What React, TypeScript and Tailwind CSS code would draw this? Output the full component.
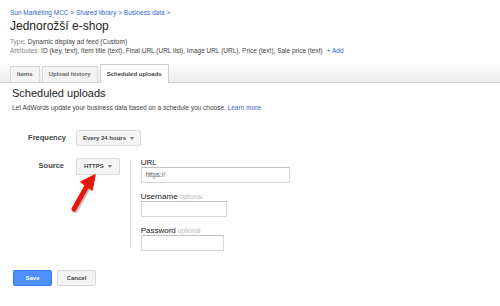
const font = { fontFamily: '"Liberation Sans", Arial, sans-serif' };

function Caret() {
  return <span className="ml-[4px] inline-block h-0 w-0 border-x-[2px] border-t-[3px] border-x-transparent border-t-[#777] align-middle" />;
}

function Field({ label, optional, width, value }: { label: string; optional?: boolean; width: string; value?: string }) {
  return (
    <div>
      <div className="text-[8px] leading-[8px] text-[#222]">
        {label}
        {optional && <span className="ml-[2px] text-[6.5px] text-[#bbb]">optional</span>}
      </div>
      <div className={`h-[16px] ${width} border border-[#d9d9d9] border-t-[#c0c0c0] bg-white px-[4px] text-[6.5px] leading-[14px] text-[#555]`}>
        {value}
      </div>
    </div>
  );
}

export default function App() {
  return (
    <div className="relative h-[306px] w-[500px] overflow-hidden bg-white" style={font}>
      <div className="px-[10px] pt-[9px]">
        <div className="text-[6.5px] leading-[8px] text-[#3366cc]">Sun Marketing MCC &gt; Shared library &gt; Business data &gt;</div>
        <h1 className="mt-[2px] text-[12px] leading-[15px] text-[#222]">Jednorožší e-shop</h1>
        <div className="mt-[3px] text-[6.5px] leading-[9px] text-[#444]">
          <span className="text-[#888]">Type:</span> Dynamic display ad feed (Custom)
        </div>
        <div className="text-[6.5px] leading-[9px] text-[#444]">
          <span className="text-[#888]">Attributes:</span> ID (key, text), Item title (text), Final URL (URL list), Image URL (URL), Price (text), Sale price (text)
          <span className="ml-[4px] text-[#3366cc]">+ Add</span>
        </div>
      </div>

      <div className="mt-[6px] flex h-[22px] items-end border-b border-[#cfcfcf] bg-gradient-to-b from-white to-[#ececec] pl-[10px]">
        <div className="mr-[2px] flex h-[16px] items-center border border-b-0 border-[#d6d6d6] bg-[#f3f3f3] px-[6px] text-[6px] font-bold text-[#666]">Items</div>
        <div className="mr-[2px] flex h-[16px] items-center border border-b-0 border-[#d6d6d6] bg-[#f3f3f3] px-[6px] text-[6px] font-bold text-[#666]">Upload history</div>
        <div className="-mb-px flex h-[19px] items-center border border-b-0 border-[#cfcfcf] bg-white px-[6px] text-[6px] font-bold text-[#444]">Scheduled uploads</div>
      </div>

      <div className="px-[12px]">
        <h2 className="mt-[3px] text-[11px] leading-[14px] text-[#222]">Scheduled uploads</h2>
        <p className="mt-[3px] text-[6.5px] leading-[9px] text-[#444]">
          Let AdWords update your business data based on a schedule you choose. <span className="text-[#3366cc]">Learn more</span>
        </p>
      </div>

      <div className="mt-[18px] flex items-center">
        <div className="w-[66px] text-right text-[7.5px] font-bold text-[#444]">Frequency</div>
        <div className="ml-[10px] flex h-[16px] items-center rounded-[2px] border border-[#dcdcdc] bg-[#f4f4f4] px-[6px] text-[6px] font-bold text-[#444]">
          Every 24 hours<Caret />
        </div>
      </div>

      <div className="mt-[12px] flex items-start">
        <div className="w-[64px] pt-[2px] text-right text-[7.5px] font-bold text-[#444]">Source</div>
        <div className="ml-[12px] flex h-[17px] items-center rounded-[2px] border border-[#dcdcdc] bg-[#f4f4f4] px-[7px] text-[6px] font-bold text-[#444]">
          HTTPS<Caret />
        </div>
        <div className="ml-[10px] mt-[1px] flex h-[90px] flex-col gap-[10px] border-l border-[#e3e3e3] pl-[10px]">
          <Field label="URL" width="w-[149px]" value="https://" />
          <Field label="Username" optional width="w-[86px]" />
          <Field label="Password" optional width="w-[83px]" />
        </div>
      </div>

      <div className="ml-[13px] mt-[21px] flex gap-[5px]">
        <div className="flex h-[16px] w-[39px] items-center justify-center rounded-[2px] border border-[#3079ed] bg-[#4d90fe] text-[6px] font-bold text-white">Save</div>
        <div className="flex h-[16px] w-[39px] items-center justify-center rounded-[2px] border border-[#d9d9d9] bg-[#f4f4f4] text-[6px] font-bold text-[#444]">Cancel</div>
      </div>

      <svg className="absolute left-[65px] top-[171px]" width="36" height="42" viewBox="0 0 36 42">
        <path d="M9 38 L22 15" stroke="#555" strokeOpacity="0.35" strokeWidth="6" strokeLinecap="round" transform="translate(1,1.5)" />
        <path d="M9 38 L22 15" stroke="#e8160c" strokeWidth="5" strokeLinecap="round" />
        <path d="M30 4 L16 11 L27 19 Z" fill="#e8160c" stroke="#e8160c" strokeWidth="1.5" strokeLinejoin="round" />
      </svg>
    </div>
  );
}
